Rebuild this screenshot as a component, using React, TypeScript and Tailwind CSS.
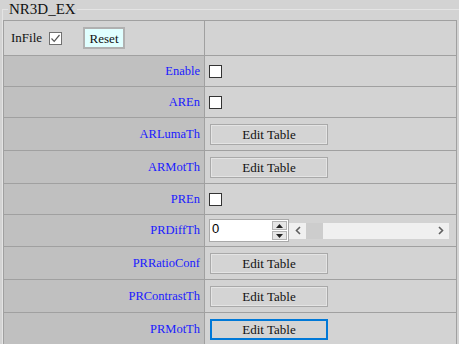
function Box({ checked = false }: { checked?: boolean }) {
  if (checked) {
    return (
      <span className="inline-flex h-[13px] w-[13px] items-center justify-center border border-[#707070] bg-white align-middle">
        <svg width="11" height="11" viewBox="0 0 11 11">
          <path d="M1.5 5.5 L4.2 8.3 L9.5 2" fill="none" stroke="#555" strokeWidth="1.2" />
        </svg>
      </span>
    );
  }
  return <span className="inline-block h-[13px] w-[13px] border border-[#333] bg-white align-middle" />;
}

function EditTable({ focused = false }: { focused?: boolean }) {
  return (
    <button
      className={
        focused
          ? "h-[21px] w-[118px] border-2 border-[#0078d7] bg-[#d4d4d4] font-['Liberation_Serif',serif] text-[13px] leading-[17px] text-[#111]"
          : "h-[21px] w-[118px] border border-[#a9a9a9] bg-[#d4d4d4] font-['Liberation_Serif',serif] text-[13px] leading-[17px] text-[#111] shadow-[inset_0_0_0_1px_#e4e4e4]"
      }
    >
      Edit Table
    </button>
  );
}

function NumberSlider() {
  return (
    <div className="flex items-center">
      <div className="flex h-[23px] w-[80px] items-stretch border border-[#a9a9a9] bg-white">
        <span className="flex-1 pl-[2px] font-['Liberation_Sans',Arial,sans-serif] text-[13px] leading-[18px] text-black">0</span>
        <div className="my-px mr-px flex w-[15px] flex-col gap-px">
          <span className="flex flex-1 items-center justify-center border border-[#b4b4b4] bg-[#e6e6e6]">
            <svg width="7" height="4" viewBox="0 0 7 4"><path d="M0 4 L3.5 0 L7 4 Z" fill="#222" /></svg>
          </span>
          <span className="flex flex-1 items-center justify-center border border-[#b4b4b4] bg-[#e6e6e6]">
            <svg width="7" height="4" viewBox="0 0 7 4"><path d="M0 0 L3.5 4 L7 0 Z" fill="#222" /></svg>
          </span>
        </div>
      </div>
      <div className="flex h-[16px] w-[160px] items-stretch bg-[#f0f0f0]">
        <span className="flex w-[17px] items-center justify-center">
          <svg width="6" height="9" viewBox="0 0 6 9"><path d="M5 1 L1.5 4.5 L5 8" fill="none" stroke="#606060" strokeWidth="1.6" /></svg>
        </span>
        <span className="w-[17px] bg-[#cdcdcd]" />
        <span className="flex-1" />
        <span className="flex w-[17px] items-center justify-center">
          <svg width="6" height="9" viewBox="0 0 6 9"><path d="M1 1 L4.5 4.5 L1 8" fill="none" stroke="#606060" strokeWidth="1.6" /></svg>
        </span>
      </div>
    </div>
  );
}

const rows: { label: string; h: string; kind: 'check' | 'table' | 'num' | 'focus' }[] = [
  { label: 'Enable', h: 'h-[31px]', kind: 'check' },
  { label: 'AREn', h: 'h-[31px]', kind: 'check' },
  { label: 'ARLumaTh', h: 'h-[33px]', kind: 'table' },
  { label: 'ARMotTh', h: 'h-[33px]', kind: 'table' },
  { label: 'PREn', h: 'h-[31px]', kind: 'check' },
  { label: 'PRDiffTh', h: 'h-[32px]', kind: 'num' },
  { label: 'PRRatioConf', h: 'h-[33px]', kind: 'table' },
  { label: 'PRContrastTh', h: 'h-[33px]', kind: 'table' },
  { label: 'PRMotTh', h: 'h-[33px]', kind: 'focus' },
];

export default function App() {
  return (
    <div className="h-[344px] w-[459px] overflow-hidden bg-[#d3d3d3] font-['Liberation_Serif',serif]">
      <fieldset className="ml-[2px] border-l border-t border-[#e4e4e4] pt-[2px]">
        <legend className="ml-[5px] px-[1px] font-['Liberation_Serif',serif] text-[15px] leading-[18px] text-[#111]">NR3D_EX</legend>
        <table className="w-[454px] border-collapse border border-[#a0a0a0]">
          <tbody>
            <tr className="h-[35px]">
              <td className="w-[201px] border border-[#a0a0a0] bg-[#d3d3d3] pl-[7px] font-['Liberation_Serif',serif] text-[13px] text-[#111]">
                <div className="flex items-center">
                  <span>InFile</span>
                  <span className="ml-[7px] flex"><Box checked /></span>
                  <button className="ml-[21px] h-[22px] w-[42px] border-2 border-[#b0b0b0] bg-[#e0ffff] font-['Liberation_Serif',serif] text-[13px] text-[#111]">
                    Reset
                  </button>
                </div>
              </td>
              <td className="border border-[#a0a0a0] bg-[#d3d3d3]" />
            </tr>
            {rows.map((r) => (
              <tr key={r.label} className={r.h}>
                <td className="w-[201px] border border-[#a0a0a0] bg-[#c0c0c0] pr-[4px] text-right font-['Liberation_Serif',serif] text-[12.5px] text-[#1a1aff]">
                  {r.label}
                </td>
                <td className="border border-[#a0a0a0] bg-[#d3d3d3] pl-[4px]">
                  {r.kind === 'check' && <div className="flex"><Box /></div>}
                  {r.kind === 'table' && <div className="flex pl-px"><EditTable /></div>}
                  {r.kind === 'focus' && <div className="flex pl-px"><EditTable focused /></div>}
                  {r.kind === 'num' && <NumberSlider />}
                </td>
              </tr>
            ))}
          </tbody>
        </table>
      </fieldset>
    </div>
  );
}
